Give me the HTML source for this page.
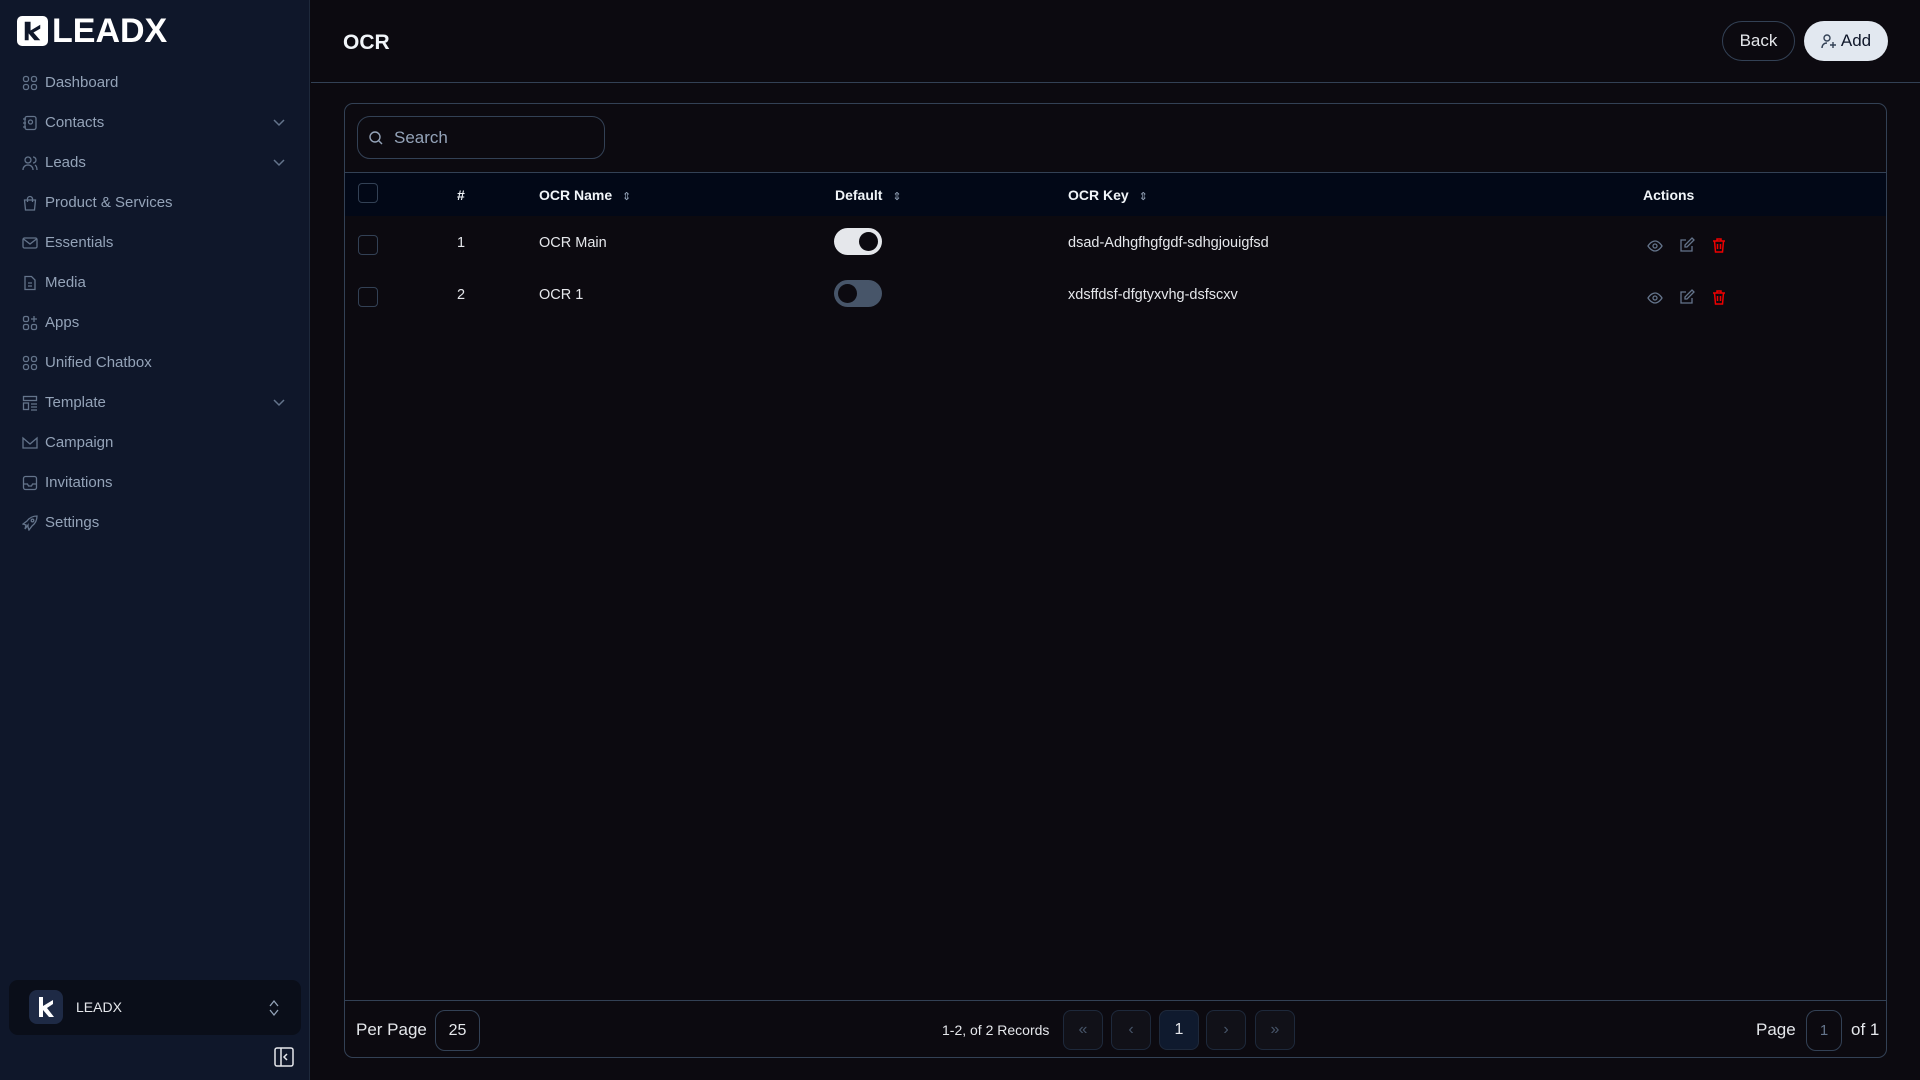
<!DOCTYPE html>
<html><head><meta charset="utf-8"><style>
*{box-sizing:border-box;margin:0;padding:0}
body{width:1920px;height:1080px;background:#0c0a10;font-family:"Liberation Sans",sans-serif;color:#e5e7eb;position:relative;overflow:hidden}
.sb{position:absolute;left:0;top:0;width:310px;height:1080px;background:#0f172a;border-right:1px solid #1e293b}
.logo{position:absolute;left:17px;top:14px;display:flex;align-items:center;gap:4px}
.logo .k{width:31px;height:30px;background:#fff;border-radius:5px;position:relative}
.logo span{font-size:34px;font-weight:bold;color:#fff;line-height:34px}
.nav{position:absolute;left:22px;font-size:15px;color:#94a3b8;display:flex;align-items:center;gap:7px}
.nav svg{width:16px;height:16px}
.chev{position:absolute;left:272px;width:14px;height:14px}
.main{position:absolute;left:311px;top:0;right:0}
.title{position:absolute;left:32px;top:31px;font-size:21px;font-weight:bold;color:#f1f5f9}
.hline{position:absolute;left:311px;right:0;top:82px;border-top:1px solid #334155}
.btn{position:absolute;top:21px;height:40px;border-radius:20px;font-size:17px;display:flex;align-items:center;justify-content:center}
.card{position:absolute;left:344px;top:103px;width:1543px;height:955px;border:1px solid #334155;border-radius:9px}
.search{position:absolute;left:12px;top:12px;width:248px;height:43px;border:1px solid #334155;border-radius:13px;font-size:17px;color:#94a3b8;padding-left:36px;line-height:41px}
.thead{position:absolute;left:0;right:0;top:68px;height:44px;background:#020817;border-top:1px solid #334155}
.th{position:absolute;top:14px;font-size:14px;font-weight:bold;color:#f1f5f9}
.th i{font-style:normal;color:#94a3b8;font-weight:normal;margin-left:6px;font-size:11px}
.cb{position:absolute;left:13px;width:20px;height:20px;border:1px solid #334155;border-radius:4px}
.td{position:absolute;font-size:14.5px;color:#e5e7eb}
.tg{position:absolute;left:489px;width:48px;height:27px;border-radius:14px}
.ic{position:absolute;width:16px;height:16px}
.foot{position:absolute;left:0;right:0;top:896px;border-top:1px solid #334155}
.pb{position:absolute;top:906px;width:40px;height:40px;border:1px solid #1e293b;border-radius:8px;background:#111118;color:#475569;font-size:16px;display:flex;align-items:center;justify-content:center}
</style></head><body>
<div class="sb">
 <div class="logo"><div class="k"><svg width="31" height="30" viewBox="0 0 32 31"><path d="M8 6v19h4v-7l6 7h6l-7-8 7-4v-4l-10 6V6z" fill="#0f172a"/></svg></div><span>LEADX</span></div>
 <div class="nav" style="top:74px"><svg viewBox="0 0 16 16" fill="none" stroke="#64748b" stroke-width="1.3"><rect x="1.5" y="1.5" width="5" height="5" rx="2"/><rect x="9.5" y="1.5" width="5" height="5" rx="2"/><rect x="1.5" y="9.5" width="5" height="5" rx="2"/><rect x="9.5" y="9.5" width="5" height="5" rx="2"/></svg>Dashboard</div>
 <div class="nav" style="top:114px"><svg viewBox="0 0 16 16" fill="none" stroke="#64748b" stroke-width="1.3"><rect x="3" y="1.5" width="11" height="13" rx="2"/><circle cx="8.5" cy="7" r="2"/><path d="M1 4h3M1 8h3M1 12h3"/></svg>Contacts</div>
 <div class="nav" style="top:154px"><svg viewBox="0 0 16 16" fill="none" stroke="#64748b" stroke-width="1.3"><circle cx="6" cy="5" r="3"/><path d="M1 15c0-3 2-5 5-5s5 2 5 5M11 2a3 3 0 010 6M13 10c1.5 1 2 3 2 5"/></svg>Leads</div>
 <div class="nav" style="top:194px"><svg viewBox="0 0 16 16" fill="none" stroke="#64748b" stroke-width="1.3"><path d="M2.5 5h11l-1 10h-9z M5.5 7V4a2.5 2.5 0 015 0v3"/></svg>Product &amp; Services</div>
 <div class="nav" style="top:234px"><svg viewBox="0 0 16 16" fill="none" stroke="#64748b" stroke-width="1.3"><rect x="1" y="3" width="14" height="10" rx="1.5"/><path d="M1.5 4l6.5 5 6.5-5"/></svg>Essentials</div>
 <div class="nav" style="top:274px"><svg viewBox="0 0 16 16" fill="none" stroke="#64748b" stroke-width="1.3"><path d="M3 1.5h6.5l3.5 3.5v9.5H3z M6 8h4M6 11h4"/></svg>Media</div>
 <div class="nav" style="top:314px"><svg viewBox="0 0 16 16" fill="none" stroke="#64748b" stroke-width="1.3"><rect x="1.5" y="1.5" width="5" height="5" rx="1.5"/><path d="M12 1v6M9 4h6"/><rect x="1.5" y="9.5" width="5" height="5" rx="1.5"/><rect x="9.5" y="9.5" width="5" height="5" rx="1.5"/></svg>Apps</div>
 <div class="nav" style="top:354px"><svg viewBox="0 0 16 16" fill="none" stroke="#64748b" stroke-width="1.3"><rect x="1.5" y="1.5" width="5" height="5" rx="2"/><rect x="9.5" y="1.5" width="5" height="5" rx="2"/><rect x="1.5" y="9.5" width="5" height="5" rx="2"/><rect x="9.5" y="9.5" width="5" height="5" rx="2"/></svg>Unified Chatbox</div>
 <div class="nav" style="top:394px"><svg viewBox="0 0 16 16" fill="none" stroke="#64748b" stroke-width="1.3"><rect x="1.5" y="1.5" width="13" height="4"/><rect x="1.5" y="8" width="5" height="6.5"/><path d="M9 9h6M9 12h6M9 15h6"/></svg>Template</div>
 <div class="nav" style="top:434px"><svg viewBox="0 0 16 16" fill="none" stroke="#64748b" stroke-width="1.3"><path d="M1 3v10h14V3l-7 6z"/></svg>Campaign</div>
 <div class="nav" style="top:474px"><svg viewBox="0 0 16 16" fill="none" stroke="#64748b" stroke-width="1.3"><rect x="1.5" y="1.5" width="13" height="13" rx="2"/><path d="M1.5 9h4l1 2h3l1-2h4"/></svg>Invitations</div>
 <div class="nav" style="top:514px"><svg viewBox="0 0 16 16" fill="none" stroke="#64748b" stroke-width="1.3"><path d="M6 10l-3 4 1-4-3-1 4-3c3-4 7-5 10-5 0 3-1 7-5 10l-3 4-1-3z"/><circle cx="10.5" cy="5.5" r="1.3"/></svg>Settings</div>
 <svg class="chev" style="top:115px" viewBox="0 0 14 14" fill="none" stroke="#64748b" stroke-width="1.5"><path d="M2 5l5 5 5-5"/></svg>
 <svg class="chev" style="top:155px" viewBox="0 0 14 14" fill="none" stroke="#64748b" stroke-width="1.5"><path d="M2 5l5 5 5-5"/></svg>
 <svg class="chev" style="top:395px" viewBox="0 0 14 14" fill="none" stroke="#64748b" stroke-width="1.5"><path d="M2 5l5 5 5-5"/></svg>
 <div style="position:absolute;left:9px;top:980px;width:292px;height:55px;background:#0a0e19;border-radius:9px">
  <div style="position:absolute;left:20px;top:10px;width:34px;height:34px;background:#1e2a45;border-radius:8px"><svg width="34" height="34" viewBox="0 0 34 34"><path d="M10 7v20h4v-7l6 7h5l-7-9 6-4v-4l-10 6V7z" fill="#fff"/></svg></div>
  <div style="position:absolute;left:67px;top:19px;font-size:14px;color:#e5e7eb">LEADX</div>
  <svg style="position:absolute;left:258px;top:18px" width="14" height="20" viewBox="0 0 14 20" fill="none" stroke="#94a3b8" stroke-width="1.3"><path d="M3 8l4-5 4 5M3 12l4 5 4-5"/></svg>
 </div>
 <svg style="position:absolute;left:273px;top:1046px" width="22" height="22" viewBox="0 0 22 22" fill="none" stroke="#e5e7eb" stroke-width="1.5"><rect x="2" y="2" width="18" height="18" rx="2"/><path d="M8 2v18M14 8l-3 3 3 3"/></svg>
</div>
<div class="main"><div class="title">OCR</div></div>
<div class="hline"></div>
<div class="btn" style="left:1722px;width:73px;border:1px solid #334155;color:#e5e7eb">Back</div>
<div class="btn" style="left:1804px;width:84px;background:#e2e8f0;color:#0f172a;gap:4px"><svg width="16" height="16" viewBox="0 0 16 16" fill="none" stroke="#334155" stroke-width="1.4"><circle cx="6" cy="5" r="3"/><path d="M1 15c0-3 2-5 5-5M12 9v6M9 12h6"/></svg>Add</div>
<div class="card">
 <div class="search"><svg style="position:absolute;left:10px;top:13px" width="16" height="16" viewBox="0 0 16 16" fill="none" stroke="#94a3b8" stroke-width="1.4"><circle cx="7" cy="7" r="5"/><path d="M11 11l3 3"/></svg>Search</div>
 <div class="thead">
  <div class="cb" style="top:10px"></div>
  <div class="th" style="left:112px">#</div>
  <div class="th" style="left:194px">OCR Name <i>⇕</i></div>
  <div class="th" style="left:490px">Default <i>⇕</i></div>
  <div class="th" style="left:723px">OCR Key <i>⇕</i></div>
  <div class="th" style="left:1298px">Actions</div>
 </div>
 <div class="cb" style="top:131px"></div>
 <div class="td" style="left:112px;top:131px">1</div>
 <div class="td" style="left:194px;top:131px">OCR Main</div>
 <div class="tg" style="top:124px;background:#e5e7eb"><div style="position:absolute;right:4px;top:4px;width:19px;height:19px;border-radius:50%;background:#0c0a10"></div></div>
 <div class="td" style="left:723px;top:131px">dsad-Adhgfhgfgdf-sdhgjouigfsd</div>
 <div class="cb" style="top:183px"></div>
 <div class="td" style="left:112px;top:183px">2</div>
 <div class="td" style="left:194px;top:183px">OCR 1</div>
 <div class="tg" style="top:176px;background:#475569"><div style="position:absolute;left:4px;top:4px;width:19px;height:19px;border-radius:50%;background:#0c0a10"></div></div>
 <div class="td" style="left:723px;top:183px">xdsffdsf-dfgtyxvhg-dsfscxv</div>
 <svg class="ic" style="left:1302px;top:134px" viewBox="0 0 16 16" fill="none" stroke="#64748b" stroke-width="1.3"><path d="M1 8s3-5 7-5 7 5 7 5-3 5-7 5-7-5-7-5z"/><circle cx="8" cy="8" r="2"/></svg>
 <svg class="ic" style="left:1334px;top:133px" viewBox="0 0 16 16" fill="none" stroke="#64748b" stroke-width="1.3"><path d="M7 3H2v11h11V9M13 1l2 2-7 7H6V8z"/></svg>
 <svg class="ic" style="left:1366px;top:133px" viewBox="0 0 16 16" fill="none" stroke="#ef0000" stroke-width="1.5"><path d="M2 4h12M6 4V2h4v2M3.5 4l1 11h7l1-11M6.5 7v5M9.5 7v5"/></svg>
 <svg class="ic" style="left:1302px;top:186px" viewBox="0 0 16 16" fill="none" stroke="#64748b" stroke-width="1.3"><path d="M1 8s3-5 7-5 7 5 7 5-3 5-7 5-7-5-7-5z"/><circle cx="8" cy="8" r="2"/></svg>
 <svg class="ic" style="left:1334px;top:185px" viewBox="0 0 16 16" fill="none" stroke="#64748b" stroke-width="1.3"><path d="M7 3H2v11h11V9M13 1l2 2-7 7H6V8z"/></svg>
 <svg class="ic" style="left:1366px;top:185px" viewBox="0 0 16 16" fill="none" stroke="#ef0000" stroke-width="1.5"><path d="M2 4h12M6 4V2h4v2M3.5 4l1 11h7l1-11M6.5 7v5M9.5 7v5"/></svg>
 <div class="foot"></div>
 <div class="td" style="left:11px;top:916px;font-size:17px">Per Page</div>
 <div style="position:absolute;left:90px;top:906px;width:45px;height:41px;border:1px solid #334155;border-radius:10px;font-size:16px;text-align:center;line-height:39px">25</div>
 <div class="td" style="left:597px;top:918px;font-size:14px">1-2, of 2 Records</div>
 <div class="pb" style="left:718px">«</div>
 <div class="pb" style="left:766px">‹</div>
 <div class="pb" style="left:814px;background:#0f1a2e;color:#e5e7eb">1</div>
 <div class="pb" style="left:861px">›</div>
 <div class="pb" style="left:910px">»</div>
 <div class="td" style="left:1411px;top:916px;font-size:17px">Page</div>
 <div style="position:absolute;left:1461px;top:906px;width:36px;height:41px;border:1px solid #334155;border-radius:10px;font-size:15px;color:#64748b;text-align:center;line-height:39px">1</div>
 <div class="td" style="left:1506px;top:916px;font-size:17px">of 1</div>
</div>
</body></html>
